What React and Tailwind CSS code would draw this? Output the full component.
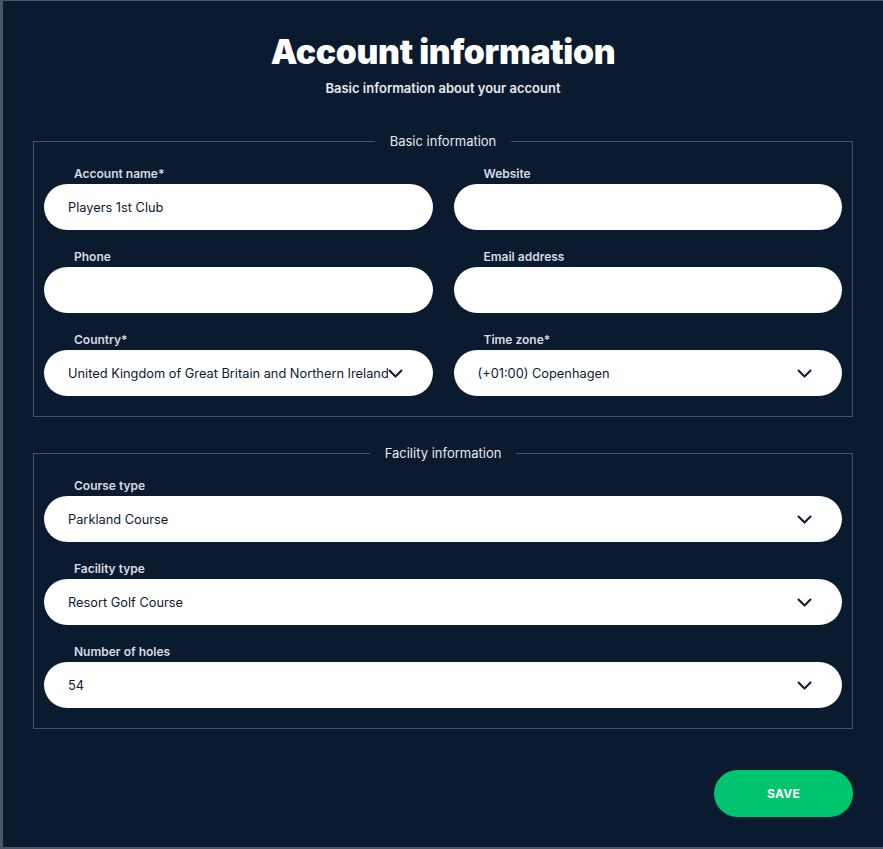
import React from "react";

const Chevron = () => (
  <svg width="15" height="9" viewBox="0 0 15 9" fill="none" className="shrink-0">
    <path d="M1.5 1.5 L7.5 7.5 L13.5 1.5" stroke="#0b1a2f" strokeWidth="2" strokeLinecap="round" strokeLinejoin="round" />
  </svg>
);

const Field = ({ label, value = "", select = false }) => (
  <div className="flex flex-col">
    <label className="pl-[30px] text-[12px] leading-4 font-semibold text-[#d7dbe2] mb-[2px]">{label}</label>
    <div className="h-[46px] rounded-full bg-white flex items-center pl-6 pr-[30px]">
      <div className="flex-1 min-w-0 overflow-hidden whitespace-nowrap text-[12.8px] leading-5 pt-[2px] text-[#0b1a2f]">{value}</div>
      {select && <Chevron />}
    </div>
  </div>
);

const Section = ({ title, children, grid = false }) => (
  <fieldset className="border border-[#46526a] px-[10px] pt-[15px] pb-5">
    <legend className="mx-auto px-[15px] text-[13px] leading-[19px] text-[#e6e9ee]">{title}</legend>
    <div className={grid ? "grid grid-cols-2 gap-x-[21px] gap-y-[19px]" : "flex flex-col gap-[19px]"}>
      {children}
    </div>
  </fieldset>
);

export default function App() {
  return (
    <div
      className="w-[883px] h-[849px] bg-[#0a1a2f] border-l-[3px] border-t border-b-2 border-[#4b5565] px-[30px] overflow-hidden"
      style={{ fontFamily: "Inter, 'Noto Sans', sans-serif" }}
    >
      <div className="flex flex-col items-center pt-[30px]">
        <h1 className="text-[33.7px] leading-[42px] font-black text-white tracking-[-0.3px]">Account information</h1>
        <p className="mt-[7px] text-[13px] leading-4 font-semibold text-[#e6e9ee]">Basic information about your account</p>
      </div>

      <div className="mt-[36px]">
        <Section title="Basic information" grid>
          <Field label="Account name*" value="Players 1st Club" />
          <Field label="Website" />
          <Field label="Phone" />
          <Field label="Email address" />
          <Field label="Country*" value="United Kingdom of Great Britain and Northern Ireland" select />
          <Field label="Time zone*" value="(+01:00) Copenhagen" select />
        </Section>
      </div>

      <div className="mt-[27px]">
        <Section title="Facility information">
          <Field label="Course type" value="Parkland Course" select />
          <Field label="Facility type" value="Resort Golf Course" select />
          <Field label="Number of holes" value="54" select />
        </Section>
      </div>

      <div className="flex justify-end mt-[41px]">
        <button className="w-[139px] h-[47px] rounded-full bg-[#00c46e] text-white text-[12px] font-bold tracking-wide">
          SAVE
        </button>
      </div>
    </div>
  );
}
